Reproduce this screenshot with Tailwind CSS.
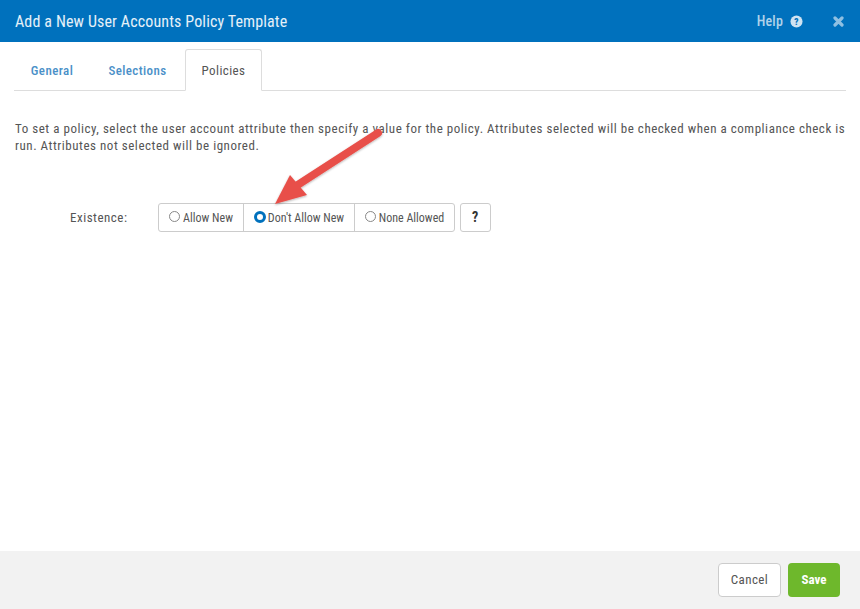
<!DOCTYPE html>
<html lang="en">
<head>
<meta charset="UTF-8">
<title>Add a New User Accounts Policy Template</title>
<script src="https://cdn.jsdelivr.net/npm/@tailwindcss/browser@4"></script>
</head>
<body class="bg-white font-['Roboto',sans-serif] text-[#555] font-stretch-[85%]">
<div class="relative w-[860px] h-[609px] flex flex-col overflow-hidden">
  <!-- header -->
  <div class="h-[42px] bg-[#0071bd] flex items-center pl-[15px] pr-[16px] shrink-0">
    <div class="text-white/90 text-[16px] tracking-[0.13px] flex-1 pt-[1px]">Add a New User Accounts Policy Template</div>
    <span class="text-white/70 text-[14px] font-medium tracking-[0.2px] mr-[7px]">Help</span>
    <svg class="w-[13px] h-[13px] mr-[30px]" viewBox="0 0 14 14"><circle cx="7" cy="7" r="6.5" fill="#cfe3f2"/><text x="7" y="10.5" text-anchor="middle" font-size="10" font-weight="900" font-family="Roboto" fill="#0071bd">?</text></svg>
    <svg class="w-[11px] h-[11px]" viewBox="0 0 11 11"><path d="M2 2 L9 9 M9 2 L2 9" stroke="#8fc0e2" stroke-width="3.2" stroke-linecap="round"/></svg>
  </div>

  <!-- tabs -->
  <div class="mt-[7px] mx-[14px] h-[42px] flex border-b border-[#ddd] text-[13px] tracking-[0.4px] shrink-0">
    <div class="w-[76px] h-[41px] pt-[2px] flex items-center justify-center text-[#4a90c8] font-medium">General</div>
    <div class="w-[95px] h-[41px] pt-[2px] flex items-center justify-center text-[#4a90c8] font-medium">Selections</div>
    <div class="w-[77px] h-[42px] pt-[1px] flex items-center justify-center bg-white border border-[#ddd] border-b-white rounded-t-[3px] text-[#555]">Policies</div>
  </div>

  <!-- body -->
  <p class="mt-[29px] ml-[15px] mr-[10px] text-[13px] leading-[17px] tracking-[0.53px] text-[#555]">To set a policy, select the user account attribute then specify a value for the policy. Attributes selected will be checked when a compliance check is run. Attributes not selected will be ignored.</p>

  <div class="mt-[49px] ml-[70px] flex items-center text-[13px] tracking-[0.5px]">
    <div class="w-[88px] pt-[1px]">Existence:</div>
    <div class="h-[29px] flex border border-[#ccc] rounded-[3px] text-[12px] tracking-normal">
      <div class="w-[85px] flex items-center justify-center gap-[3px] border-r border-[#ccc]">
        <span class="w-[11px] h-[11px] rounded-full border border-[#888] -mt-[2px]"></span>Allow New
      </div>
      <div class="w-[111px] flex items-center justify-center gap-[2px] border-r border-[#ccc]">
        <span class="w-[12px] h-[12px] rounded-full border-[3px] border-[#0071bd] -mt-[2px]"></span>Don't Allow New
      </div>
      <div class="w-[99px] flex items-center justify-center gap-[3px]">
        <span class="w-[11px] h-[11px] rounded-full border border-[#888] -mt-[2px]"></span>None Allowed
      </div>
    </div>
    <div class="ml-[5px] w-[31px] h-[29px] flex items-center justify-center border border-[#ccc] rounded-[3px] text-[14px] font-bold text-[#333]">?</div>
  </div>

  <!-- footer -->
  <div class="mt-auto h-[58px] bg-[#f2f2f2] flex items-center justify-end gap-[7px] pr-[20px] shrink-0">
    <div class="w-[63px] h-[34px] flex items-center justify-center bg-white border border-[#ccc] rounded-[4px] text-[13px] tracking-[0.4px] text-[#555]">Cancel</div>
    <div class="w-[52px] h-[34px] flex items-center justify-center bg-[#6eb82c] rounded-[4px] text-[13px] font-bold text-white">Save</div>
  </div>

  <!-- annotation arrow -->
  <svg class="absolute left-0 top-0 w-[860px] h-[609px] pointer-events-none" viewBox="0 0 860 609">
    <defs><filter id="s" x="-20%" y="-20%" width="140%" height="140%"><feDropShadow dx="0" dy="1" stdDeviation="1.2" flood-color="#000" flood-opacity="0.3"/></filter></defs>
    <g filter="url(#s)">
      <path d="M378 133 L296 186" stroke="#e8504a" stroke-width="8" stroke-linecap="round"/>
      <path d="M275 204 L290 175 L307 195 Z" fill="#e8504a"/>
    </g>
  </svg>
</div>
</body>
</html>
